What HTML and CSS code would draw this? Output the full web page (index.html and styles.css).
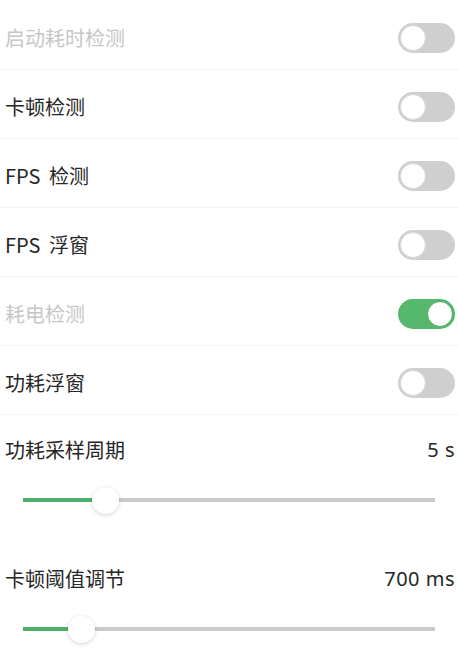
FILE: index.html
```html
<!DOCTYPE html>
<html lang="zh">
<head>
<meta charset="utf-8">
<link rel="stylesheet" href="styles.css">
</head>
<body>
<div class="list">
  <div class="row"><span class="label disabled">启动耗时检测</span><span class="toggle"><span class="knob"></span></span></div>
  <div class="row"><span class="label">卡顿检测</span><span class="toggle"><span class="knob"></span></span></div>
  <div class="row"><span class="label">FPS 检测</span><span class="toggle"><span class="knob"></span></span></div>
  <div class="row"><span class="label">FPS 浮窗</span><span class="toggle"><span class="knob"></span></span></div>
  <div class="row"><span class="label disabled">耗电检测</span><span class="toggle on"><span class="knob"></span></span></div>
  <div class="row"><span class="label">功耗浮窗</span><span class="toggle"><span class="knob"></span></span></div>
</div>
<div class="slider-block">
  <div class="slider-head"><span class="label">功耗采样周期</span><span class="value">5 s</span></div>
  <div class="slider"><div class="track"><div class="fill" style="width:20%"></div><div class="thumb" style="left:20%"></div></div></div>
</div>
<div class="slider-block">
  <div class="slider-head"><span class="label">卡顿阈值调节</span><span class="value">700 ms</span></div>
  <div class="slider"><div class="track"><div class="fill" style="width:14%"></div><div class="thumb" style="left:14.1%"></div></div></div>
</div>
</body>
</html>
```
FILE: styles.css
```css
html, body {
  margin: 0;
  padding: 0;
  background: #ffffff;
  font-family: "Noto Sans CJK SC", "Noto Sans", sans-serif;
}
.list {
  padding-top: 1px;
}
.row {
  height: 63px;
  padding: 5px 3px 0 5px;
  border-bottom: 1px solid #f2f2f2;
  display: flex;
  align-items: center;
  justify-content: space-between;
}
.label {
  font-size: 20px;
  color: #262626;
  line-height: 1;
  word-spacing: 4px;
}
.label.disabled {
  color: #c6c6c6;
}
.toggle {
  width: 57px;
  height: 30px;
  border-radius: 15px;
  background: #cfcfcf;
  display: flex;
  align-items: center;
  padding: 0 2px;
  box-sizing: border-box;
}
.toggle .knob {
  width: 26px;
  height: 26px;
  border-radius: 50%;
  background: #ffffff;
  box-sizing: border-box;
  border: 1px solid #d8d8d8;
}
.toggle.on {
  background: #55b86d;
  justify-content: flex-end;
}
.toggle.on .knob {
  border-color: #4aa862;
}
.slider-block {
  height: 129px;
}
.slider-head {
  height: 70px;
  padding: 0 3px 0 5px;
  display: flex;
  align-items: center;
  justify-content: space-between;
}
.value {
  font-size: 20px;
  color: #262626;
  line-height: 1;
  font-family: "Noto Sans", sans-serif;
  letter-spacing: 0.5px;
}
.slider {
  height: 30px;
  margin: 0 23px;
  display: flex;
  align-items: center;
}
.track {
  position: relative;
  width: 100%;
  height: 4px;
  background: #cacaca;
  border-radius: 1px;
}
.fill {
  height: 100%;
  background: #4fb06c;
}
.thumb {
  position: absolute;
  top: 50%;
  width: 27px;
  height: 27px;
  margin-left: -13.5px;
  margin-top: -13.5px;
  border-radius: 50%;
  background: #ffffff;
  box-shadow: 0 1px 4px rgba(0,0,0,0.18);
}
```
